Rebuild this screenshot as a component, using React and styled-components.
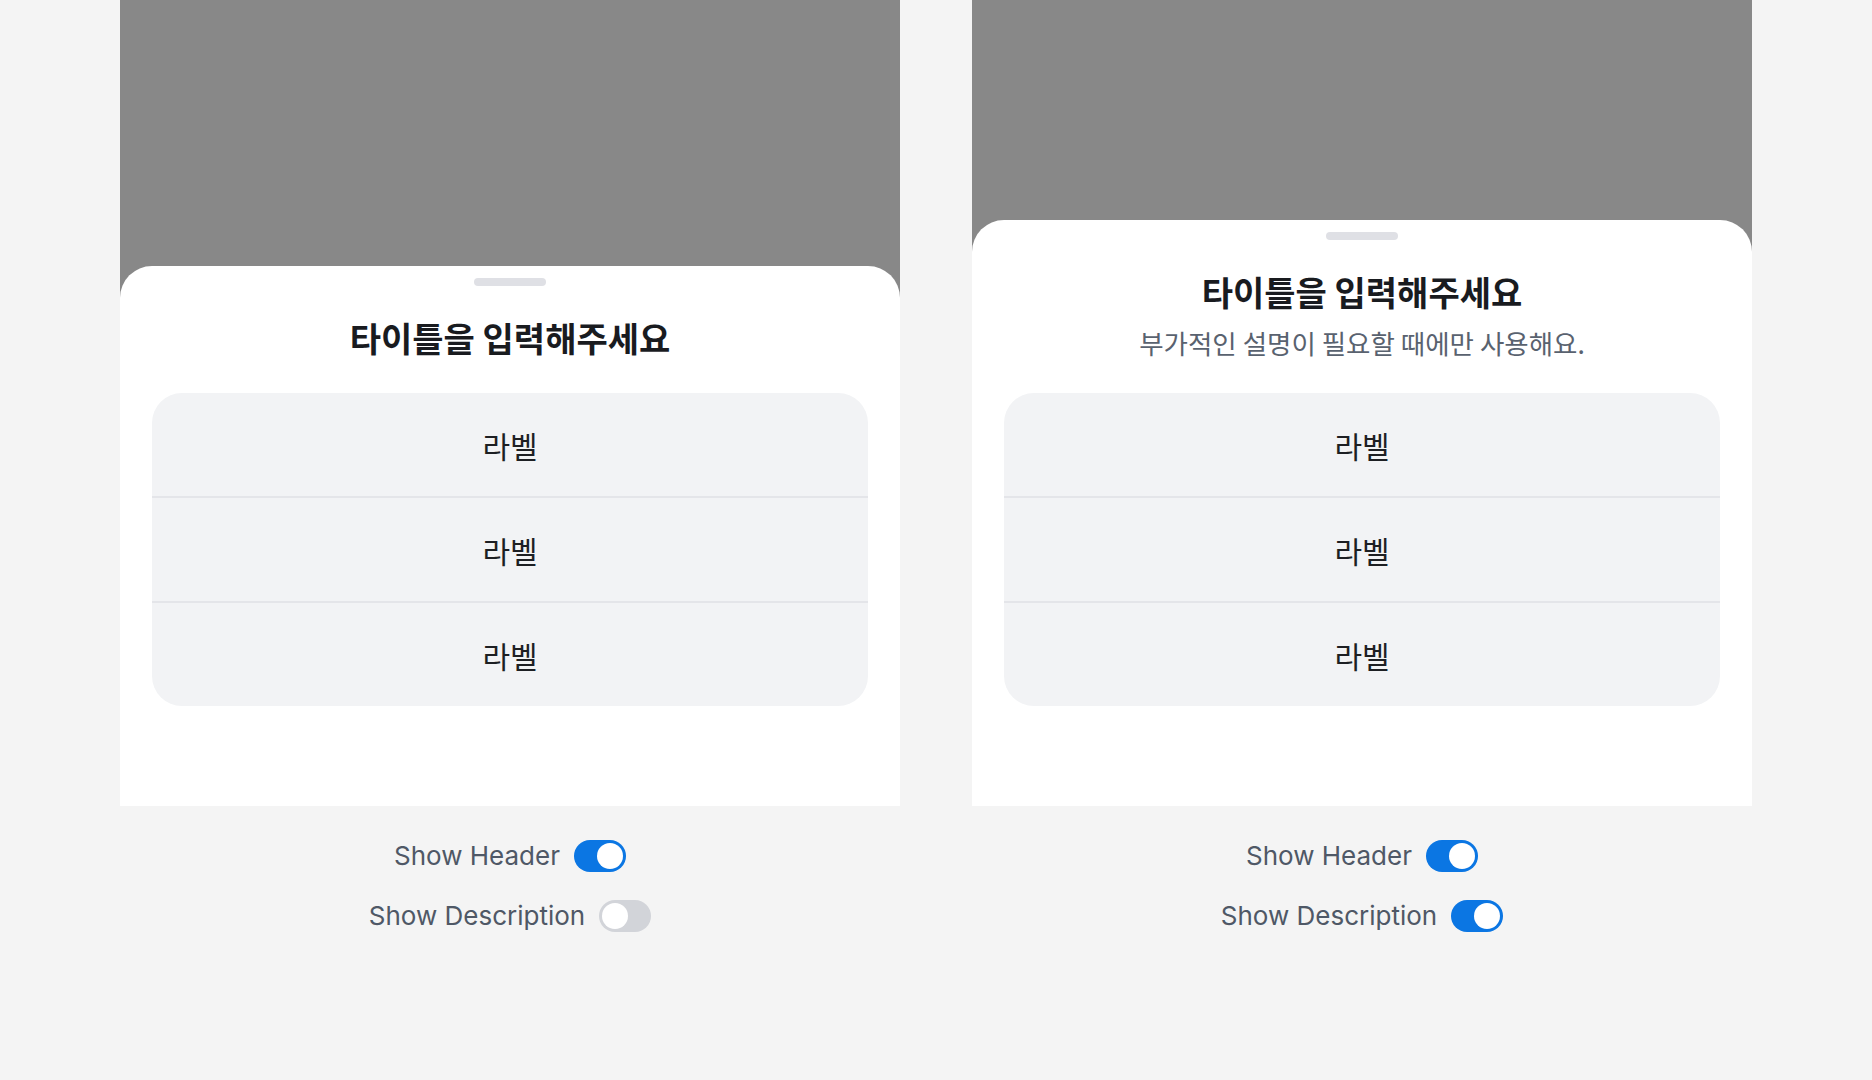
import React, { useState } from 'react'
import styled, { createGlobalStyle } from 'styled-components'

const GlobalStyle = createGlobalStyle`
  html, body {
    margin: 0;
    padding: 0;
    background: #f4f4f4;
  }
  body {
    font-family: Inter, "Noto Sans CJK KR", sans-serif;
    -webkit-font-smoothing: antialiased;
  }
`

const Page = styled.div`
  display: flex;
  flex-direction: row;
  gap: 72px;
  padding: 0 120px;
  min-height: 1080px;
  box-sizing: border-box;
`
const Column = styled.div`
  display: flex;
  flex-direction: column;
  width: 780px;
`
const Preview = styled.div`
  display: flex;
  flex-direction: column;
  justify-content: flex-end;
  height: 806px;
  background: #888888;
  overflow: hidden;
`
const Sheet = styled.div`
  display: flex;
  flex-direction: column;
  align-items: center;
  padding: 12px 32px 100px;
  background: #ffffff;
  border-radius: 32px 32px 0 0;
`
const Handle = styled.div`
  width: 72px;
  height: 8px;
  border-radius: 4px;
  background: #dfe0e5;
`
const Header = styled.div`
  display: flex;
  flex-direction: column;
  align-items: center;
  gap: 12px;
  padding: 30px 0 33px;
  font-family: "Noto Sans CJK KR", sans-serif;
`
const Title = styled.h2`
  margin: 0;
  font-size: 34px;
  line-height: 44px;
  font-weight: 700;
  color: #191b1f;
`
const Description = styled.p`
  margin: 0;
  font-size: 26.5px;
  line-height: 34px;
  font-weight: 400;
  color: #59626f;
`
const List = styled.div`
  display: flex;
  flex-direction: column;
  align-self: stretch;
  background: #f2f3f5;
  border-radius: 30px;
  overflow: hidden;
`
const Item = styled.button`
  display: flex;
  align-items: center;
  justify-content: center;
  box-sizing: content-box;
  height: 103px;
  padding: 0;
  border: 0;
  border-top: ${props => (props.$first ? '0' : '2px solid #e4e5e9')};
  background: transparent;
  font-family: "Noto Sans CJK KR", sans-serif;
  font-size: 30px;
  font-weight: 400;
  color: #1d1f23;
  cursor: pointer;
`
const Controls = styled.div`
  display: flex;
  flex-direction: column;
  align-items: center;
  gap: 28px;
  padding-top: 34px;
`
const ControlRow = styled.label`
  display: flex;
  align-items: center;
  gap: 14px;
  font-family: Inter, sans-serif;
  font-size: 26px;
  line-height: 32px;
  color: #4f5866;
  cursor: pointer;
`
const Track = styled.button`
  display: flex;
  align-items: center;
  justify-content: ${props => (props.$on ? 'flex-end' : 'flex-start')};
  width: 52px;
  height: 32px;
  padding: 3px;
  box-sizing: border-box;
  border: 0;
  border-radius: 16px;
  background: ${props => (props.$on ? '#0b76e3' : '#d2d4d9')};
  cursor: pointer;
`
const Knob = styled.span`
  width: 26px;
  height: 26px;
  border-radius: 50%;
  background: #ffffff;
`

const Toggle = ({ label, on, onChange }) => (
  <ControlRow>
    {label}
    <Track $on={on} onClick={() => onChange(!on)} aria-pressed={on}>
      <Knob />
    </Track>
  </ControlRow>
)

const labels = ['라벨', '라벨', '라벨']

const BottomSheetDemo = ({ initialHeader, initialDescription }) => {
  const [showHeader, setShowHeader] = useState(initialHeader)
  const [showDescription, setShowDescription] = useState(initialDescription)

  return (
    <Column>
      <Preview>
        <Sheet>
          <Handle />
          {showHeader && (
            <Header>
              <Title>타이틀을 입력해주세요</Title>
              {showDescription && <Description>부가적인 설명이 필요할 때에만 사용해요.</Description>}
            </Header>
          )}
          <List>
            {labels.map((text, i) => (
              <Item key={i} $first={i === 0}>
                {text}
              </Item>
            ))}
          </List>
        </Sheet>
      </Preview>
      <Controls>
        <Toggle label="Show Header" on={showHeader} onChange={setShowHeader} />
        <Toggle label="Show Description" on={showDescription} onChange={setShowDescription} />
      </Controls>
    </Column>
  )
}

export default function App() {
  return (
    <>
      <GlobalStyle />
      <Page>
        <BottomSheetDemo initialHeader initialDescription={false} />
        <BottomSheetDemo initialHeader initialDescription />
      </Page>
    </>
  )
}
